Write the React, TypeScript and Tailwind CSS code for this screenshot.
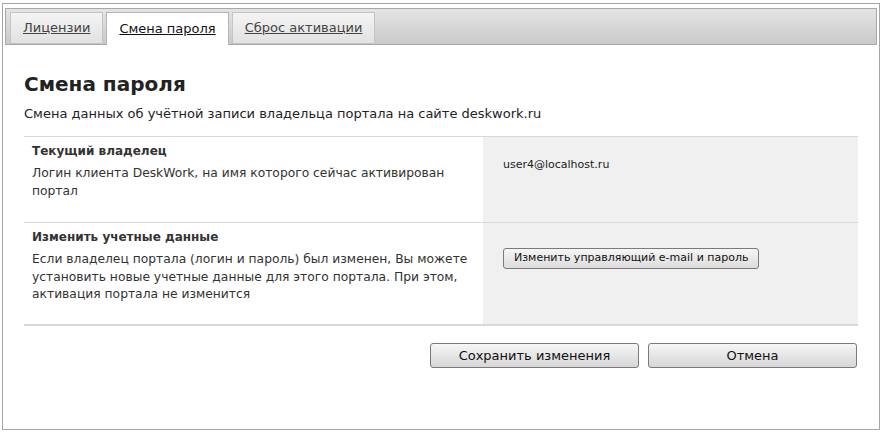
import React from "react";

const tabs = [
  { label: "Лицензии", active: false },
  { label: "Смена пароля", active: true },
  { label: "Сброс активации", active: false },
];

const rows = [
  {
    title: "Текущий владелец",
    text: "Логин клиента DeskWork, на имя которого сейчас активирован портал",
    height: "h-[86px]",
    value: <div className="pt-[20px] text-[11px] text-[#222]">user4@localhost.ru</div>,
  },
  {
    title: "Изменить учетные данные",
    text: "Если владелец портала (логин и пароль) был изменен, Вы можете установить новые учетные данные для этого портала. При этом, активация портала не изменится",
    height: "h-[102px]",
    value: (
      <div className="pt-[21px]">
        <button className="h-[21px] rounded-[3px] border border-[#7a7a7a] bg-gradient-to-b from-[#f6f6f6] to-[#dcdcdc] px-[10px] text-[11px] text-[#111]">
          Изменить управляющий e-mail и пароль
        </button>
      </div>
    ),
  },
];

export default function App() {
  return (
    <div className="h-[433px] w-[883px] bg-white pl-[2px] pt-[3px] font-['DejaVu_Sans',Verdana,sans-serif]">
      <div className="h-[427px] w-[878px] border border-[#a6a6a6] px-[2px] pt-[4px]">
        {/* Tabs */}
        <div className="flex h-[37px] w-[872px] items-end gap-[3px] border border-[#a8a8a8] bg-gradient-to-b from-[#e4e4e4] to-[#cacaca] pl-[4px]">
          {tabs.map((t) =>
            t.active ? (
              <div
                key={t.label}
                className="-mb-px flex h-[33px] items-center border border-b-0 border-[#b4b4b4] bg-white px-[12px] text-[13px] text-[#111] underline"
              >
                {t.label}
              </div>
            ) : (
              <div
                key={t.label}
                className="flex h-[32px] items-center border border-[#c4c4c4] bg-gradient-to-b from-[#f4f4f4] to-[#e2e2e2] px-[12px] text-[13px] text-[#444] underline"
              >
                {t.label}
              </div>
            )
          )}
        </div>

        <div className="pl-[19px] pr-[19px]">
          <h1 className="mt-[27px] text-[20px] leading-[24px] font-bold text-[#222]">Смена пароля</h1>
          <p className="mt-[10px] text-[13px] leading-[16px] text-[#222]">
            Смена данных об учётной записи владельца портала на сайте deskwork.ru
          </p>

          {/* Table */}
          <div className="mt-[14px] border-b-2 border-[#d8d8d8]">
            {rows.map((r) => (
              <div key={r.title} className={`flex border-t border-[#d8d8d8] ${r.height}`}>
                <div className="w-[459px] pl-[8px] pr-[10px] pt-[6px]">
                  <div className="text-[12px] leading-[16px] font-bold text-[#333]">{r.title}</div>
                  <div className="mt-[6px] text-[12.3px] leading-[17.5px] text-[#333]">{r.text}</div>
                </div>
                <div className="flex-1 bg-[#f0f0f0] pl-[20px]">{r.value}</div>
              </div>
            ))}
          </div>

          {/* Actions */}
          <div className="mt-[17px] flex justify-end gap-[9px] pr-[1px]">
            <button className="h-[25px] w-[209px] rounded-[3px] border border-[#7a7a7a] bg-gradient-to-b from-[#f6f6f6] to-[#d6d6d6] text-[13px] text-[#111]">
              Сохранить изменения
            </button>
            <button className="h-[25px] w-[209px] rounded-[3px] border border-[#7a7a7a] bg-gradient-to-b from-[#f6f6f6] to-[#d6d6d6] text-[13px] text-[#111]">
              Отмена
            </button>
          </div>
        </div>
      </div>
    </div>
  );
}
